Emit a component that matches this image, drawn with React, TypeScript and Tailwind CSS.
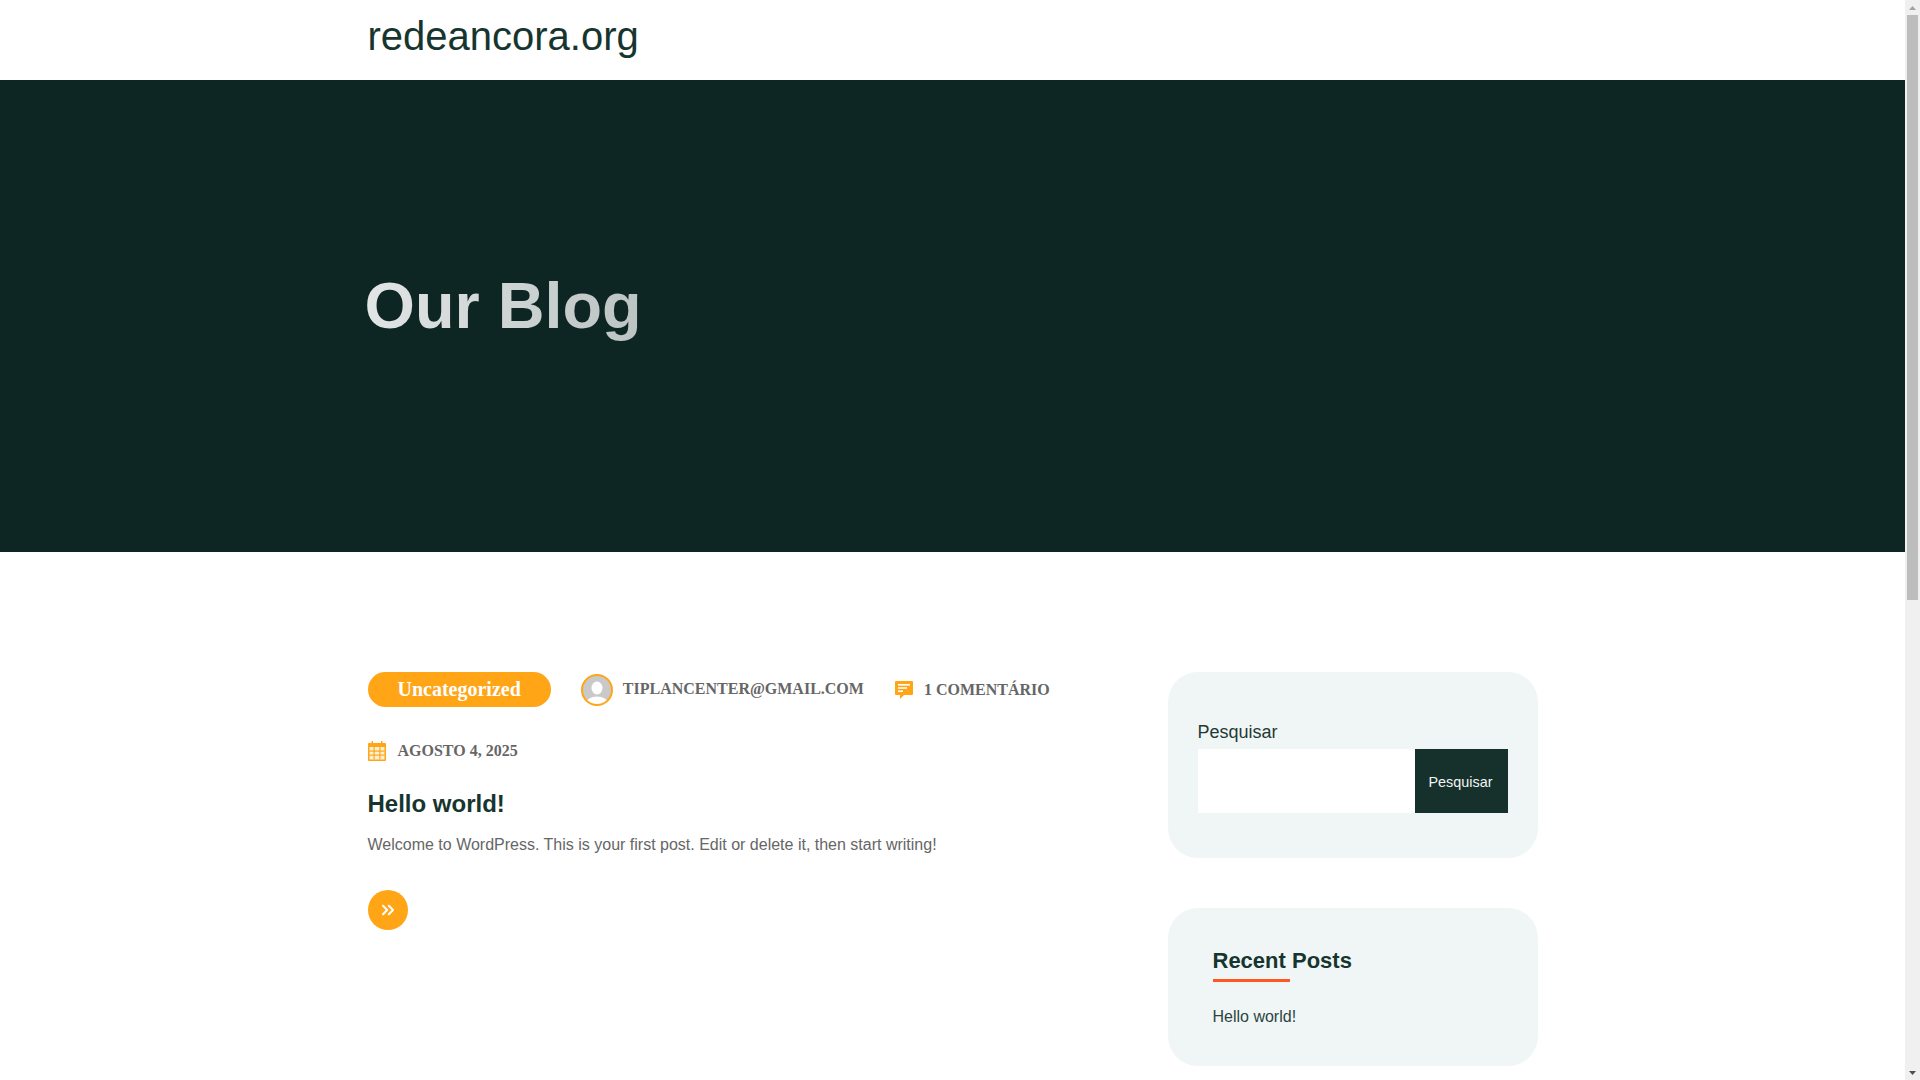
import { ChevronsRight } from 'lucide-react'

const SERIF = 'font-["Liberation_Serif","Times_New_Roman",serif]'

function CalendarIcon() {
  return (
    <svg width="18" height="20" viewBox="0 0 18 20" className="shrink-0">
      <path fill="#ffa516" d="M1 2h2.5V0h1.5v2h8V0h1.5v2H17a1 1 0 0 1 1 1v16a1 1 0 0 1-1 1H1a1 1 0 0 1-1-1V3a1 1 0 0 1 1-1z" />
      <g fill="#fff0d8">
        <rect x="1.5" y="6" width="15" height="12.5" />
      </g>
      <g fill="#ffa516">
        <rect x="5.5" y="6" width="1.2" height="12.5" />
        <rect x="11.3" y="6" width="1.2" height="12.5" />
        <rect x="1.5" y="9.5" width="15" height="1.2" />
        <rect x="1.5" y="13.5" width="15" height="1.2" />
      </g>
    </svg>
  )
}

function CommentIcon() {
  return (
    <svg width="18" height="18" viewBox="0 0 18 18" className="shrink-0">
      <path fill="#ffa516" d="M1 0h16a1 1 0 0 1 1 1v12a1 1 0 0 1-1 1H9l-4 4v-4H1a1 1 0 0 1-1-1V1a1 1 0 0 1 1-1z" />
      <g fill="#ffffff">
        <rect x="3" y="3" width="12" height="1.6" />
        <rect x="3" y="6.2" width="9" height="1.6" />
        <rect x="3" y="9.4" width="5" height="1.6" />
      </g>
    </svg>
  )
}

function Avatar() {
  return (
    <svg width="32" height="32" viewBox="0 0 32 32" className="shrink-0">
      <defs>
        <clipPath id="av">
          <circle cx="16" cy="16" r="15" />
        </clipPath>
      </defs>
      <circle cx="16" cy="16" r="15" fill="#c9c9c9" />
      <g clipPath="url(#av)" fill="#ffffff">
        <ellipse cx="16" cy="14" rx="5.5" ry="6.5" />
        <ellipse cx="16" cy="29" rx="11" ry="6.5" />
      </g>
      <circle cx="16" cy="16" r="15" fill="none" stroke="#ffa516" strokeWidth="2" />
    </svg>
  )
}

// the browser's own scrollbar doesn't show up in the photo, so it's drawn
function Scrollbar() {
  return (
    <div className="flex h-screen w-[15px] shrink-0 flex-col items-center bg-[#f0f0f0]">
      <div className="flex h-[15px] items-center justify-center">
        <svg width="7" height="4" viewBox="0 0 7 4">
          <path d="M3.5 0 7 4H0z" fill="#a3a3a3" />
        </svg>
      </div>
      <div className="h-[585px] w-[11px] bg-[#bdbdbd]" />
      <div className="flex-1" />
      <div className="flex h-[15px] items-center justify-center">
        <svg width="7" height="4" viewBox="0 0 7 4">
          <path d="M0 0h7L3.5 4z" fill="#505050" />
        </svg>
      </div>
    </div>
  )
}

export default function App() {
  return (
    <div className="flex h-screen overflow-hidden">
      <div className='min-w-0 flex-1 bg-white font-["Liberation_Sans",Arial,sans-serif] text-[#666666]'>
        <header className="h-20 bg-white">
          <div className="mx-auto w-[1170px]">
            <a className="block pt-[12px] text-[40px] leading-[48px] text-[#17352f]">redeancora.org</a>
          </div>
        </header>

        <section className="flex h-[472px] items-center bg-[#0e2623] pb-[20px]">
          <div className="mx-auto w-[1170px]">
            <h1 className="-ml-[3px] w-fit bg-gradient-to-r from-[#e2e5e5] to-[#bcc3c3] bg-clip-text text-[64.8px] font-bold leading-[72px] text-transparent">
              Our Blog
            </h1>
          </div>
        </section>

        <main className="mx-auto flex w-[1170px] justify-between pt-[120px]">
          <article className="w-[760px]">
            <div className={`flex items-center ${SERIF} text-base font-bold uppercase`}>
              <span className="rounded-[20px] bg-[#ffa516] px-[30px] text-[20px] normal-case leading-[35px] text-white">
                Uncategorized
              </span>
              <span className="ml-[30px] flex items-center gap-[10px]">
                <Avatar />
                <span className="-mt-[2px]">tiplancenter@gmail.com</span>
              </span>
              <span className="ml-[31px] flex items-center gap-[11px]">
                <CommentIcon />
                <span>1 comentário</span>
              </span>
            </div>

            <div className={`mt-[32px] flex items-center gap-[12px] ${SERIF} text-base font-bold uppercase`}>
              <CalendarIcon />
              <span>agosto 4, 2025</span>
            </div>

            <h2 className="mt-[23px] text-[24px] font-bold leading-[36px] text-[#17352f]">Hello world!</h2>
            <p className="mt-[11px] text-base leading-[24px]">
              Welcome to WordPress. This is your first post. Edit or delete it, then start writing!
            </p>

            <a className="mt-[33px] flex h-10 w-10 items-center justify-center rounded-full bg-[#ffa516] text-white">
              <ChevronsRight size={20} strokeWidth={2.5} />
            </a>
          </article>

          <aside className="w-[370px]">
            <div className="h-[186px] rounded-[30px] bg-[#f0f6f6] px-[30px] pt-[47px]">
              <label className="block text-[18px] leading-[27px] text-[#1f3a35]">Pesquisar</label>
              <div className="mt-[3px] flex h-16">
                <input className="min-w-0 flex-1 bg-white outline-none" />
                <button className="w-[93px] bg-[#16302b] pl-[14px] pt-[4px] text-left text-[14.4px] text-[#f0f6f6]">
                  Pesquisar
                </button>
              </div>
            </div>

            <div className="mt-[50px] h-[158px] rounded-[30px] bg-[#f0f6f6] px-[45px] pt-[36px]">
              <h3 className="text-[22px] font-bold leading-[33px] text-[#17352f]">Recent Posts</h3>
              <div className="mt-[2px] h-[3px] w-[77px] bg-[#ff5722]" />
              <a className="mt-[23px] block text-base leading-[24px] text-[#2a4540]">Hello world!</a>
            </div>
          </aside>
        </main>
      </div>
      <Scrollbar />
    </div>
  )
}
